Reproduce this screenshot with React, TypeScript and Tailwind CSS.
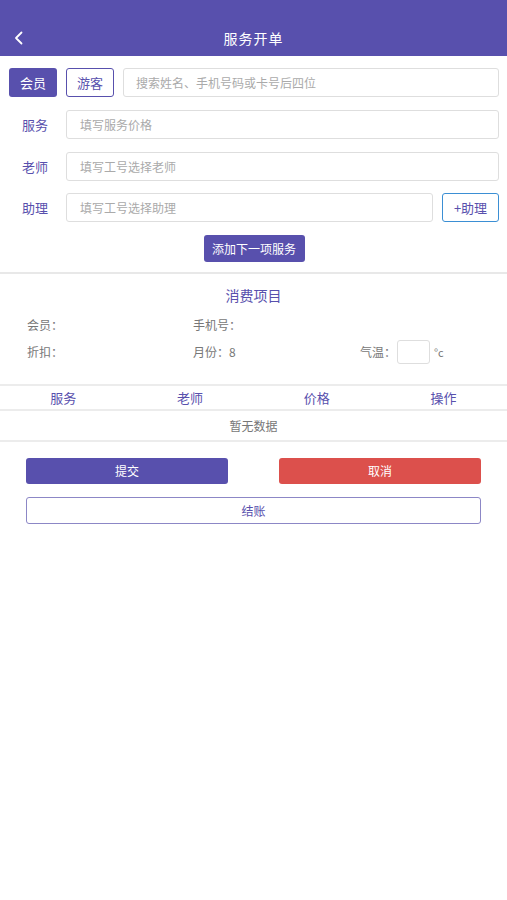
import React from "react";

const font = { fontFamily: '"Noto Sans CJK SC", "Noto Sans", sans-serif' };

export default function App() {
  return (
    <div className="w-[507px] min-h-[900px] bg-white" style={font}>
      <div className="h-[56px] bg-[#5850ad] pt-[20px]">
        <div className="relative h-[36px] flex items-center justify-center">
          <svg className="absolute left-[13px] top-[11px]" width="12" height="14" viewBox="0 0 12 14" fill="none">
            <path d="M8.5 1.5 L3 7 L8.5 12.5" stroke="white" strokeWidth="1.8" strokeLinecap="round" strokeLinejoin="round" />
          </svg>
          <span className="text-white text-[14px] tracking-[1px]">服务开单</span>
        </div>
      </div>

      <div className="pl-[9px] pr-[8px] pt-[12px]">
        <div className="flex items-center h-[29px] gap-[9px]">
          <div className="w-[48px] h-[29px] rounded-[3px] bg-[#5850ad] text-white text-[13px] flex items-center justify-center">会员</div>
          <div className="w-[48px] h-[29px] rounded-[3px] border border-[#5850ad] text-[#5850ad] text-[13px] flex items-center justify-center">游客</div>
          <div className="flex-1 h-[29px] rounded-[3px] border border-[#dedede] flex items-center pl-[12px] text-[12px] text-[#aaaaaa]">搜索姓名、手机号码或卡号后四位</div>
        </div>

        <div className="flex items-center h-[29px] mt-[13px]">
          <div className="w-[57px] pl-[13px] text-[13px] text-[#5850ad]">服务</div>
          <div className="flex-1 h-[29px] rounded-[3px] border border-[#dedede] flex items-center pl-[13px] text-[12px] text-[#aaaaaa]">填写服务价格</div>
        </div>

        <div className="flex items-center h-[29px] mt-[13px]">
          <div className="w-[57px] pl-[13px] text-[13px] text-[#5850ad]">老师</div>
          <div className="flex-1 h-[29px] rounded-[3px] border border-[#dedede] flex items-center pl-[13px] text-[12px] text-[#aaaaaa]">填写工号选择老师</div>
        </div>

        <div className="flex items-center h-[29px] mt-[12px] gap-[9px]">
          <div className="flex flex-1 items-center">
            <div className="w-[57px] pl-[13px] text-[13px] text-[#5850ad]">助理</div>
            <div className="flex-1 h-[29px] rounded-[3px] border border-[#dedede] flex items-center pl-[13px] text-[12px] text-[#aaaaaa]">填写工号选择助理</div>
          </div>
          <div className="w-[57px] h-[29px] rounded-[3px] border border-[#3b8fd4] text-[#5850ad] text-[13px] flex items-center justify-center">+助理</div>
        </div>

        <div className="flex justify-center mt-[13px]">
          <div className="w-[101px] h-[27px] rounded-[3px] bg-[#5850ad] text-white text-[12px] flex items-center justify-center">添加下一项服务</div>
        </div>
      </div>

      <div className="h-[2px] bg-[#e8e8e8] mt-[10px]" />

      <div className="h-[38px] flex items-center justify-center pt-[4px] text-[14px] text-[#5850ad]">消费项目</div>

      <div className="flex items-center h-[20px] mt-[3px] text-[12px] text-[#777777]">
        <div className="w-[193px] pl-[27px]">会员：</div>
        <div className="w-[167px]">手机号：</div>
      </div>

      <div className="flex items-center h-[24px] mt-[5px] text-[12px] text-[#777777]">
        <div className="w-[193px] pl-[27px]">折扣：</div>
        <div className="w-[167px]">月份：8</div>
        <div className="flex items-center">
          <span>气温：</span>
          <div className="w-[33px] h-[24px] rounded-[3px] border border-[#dedede] ml-[1px]" />
          <span className="ml-[4px] text-[11px]">°c</span>
        </div>
      </div>

      <div className="h-[2px] bg-[#ececec] mt-[20px]" />
      <div className="grid grid-cols-4 h-[23px] items-center text-[13px] text-[#5850ad]">
        <div className="text-center">服务</div>
        <div className="text-center">老师</div>
        <div className="text-center">价格</div>
        <div className="text-center">操作</div>
      </div>
      <div className="h-[2px] bg-[#ececec]" />
      <div className="h-[29px] flex items-center justify-center text-[12px] text-[#777777]">暂无数据</div>
      <div className="h-[2px] bg-[#ececec]" />

      <div className="px-[26px] mt-[16px]">
        <div className="flex justify-between">
          <div className="w-[202px] h-[26px] rounded-[3px] bg-[#5850ad] text-white text-[12px] flex items-center justify-center">提交</div>
          <div className="w-[202px] h-[26px] rounded-[3px] bg-[#dc504c] text-white text-[12px] flex items-center justify-center">取消</div>
        </div>
        <div className="mt-[13px] h-[27px] rounded-[3px] border border-[#8c87c6] text-[#5850ad] text-[12px] flex items-center justify-center">结账</div>
      </div>
    </div>
  );
}
